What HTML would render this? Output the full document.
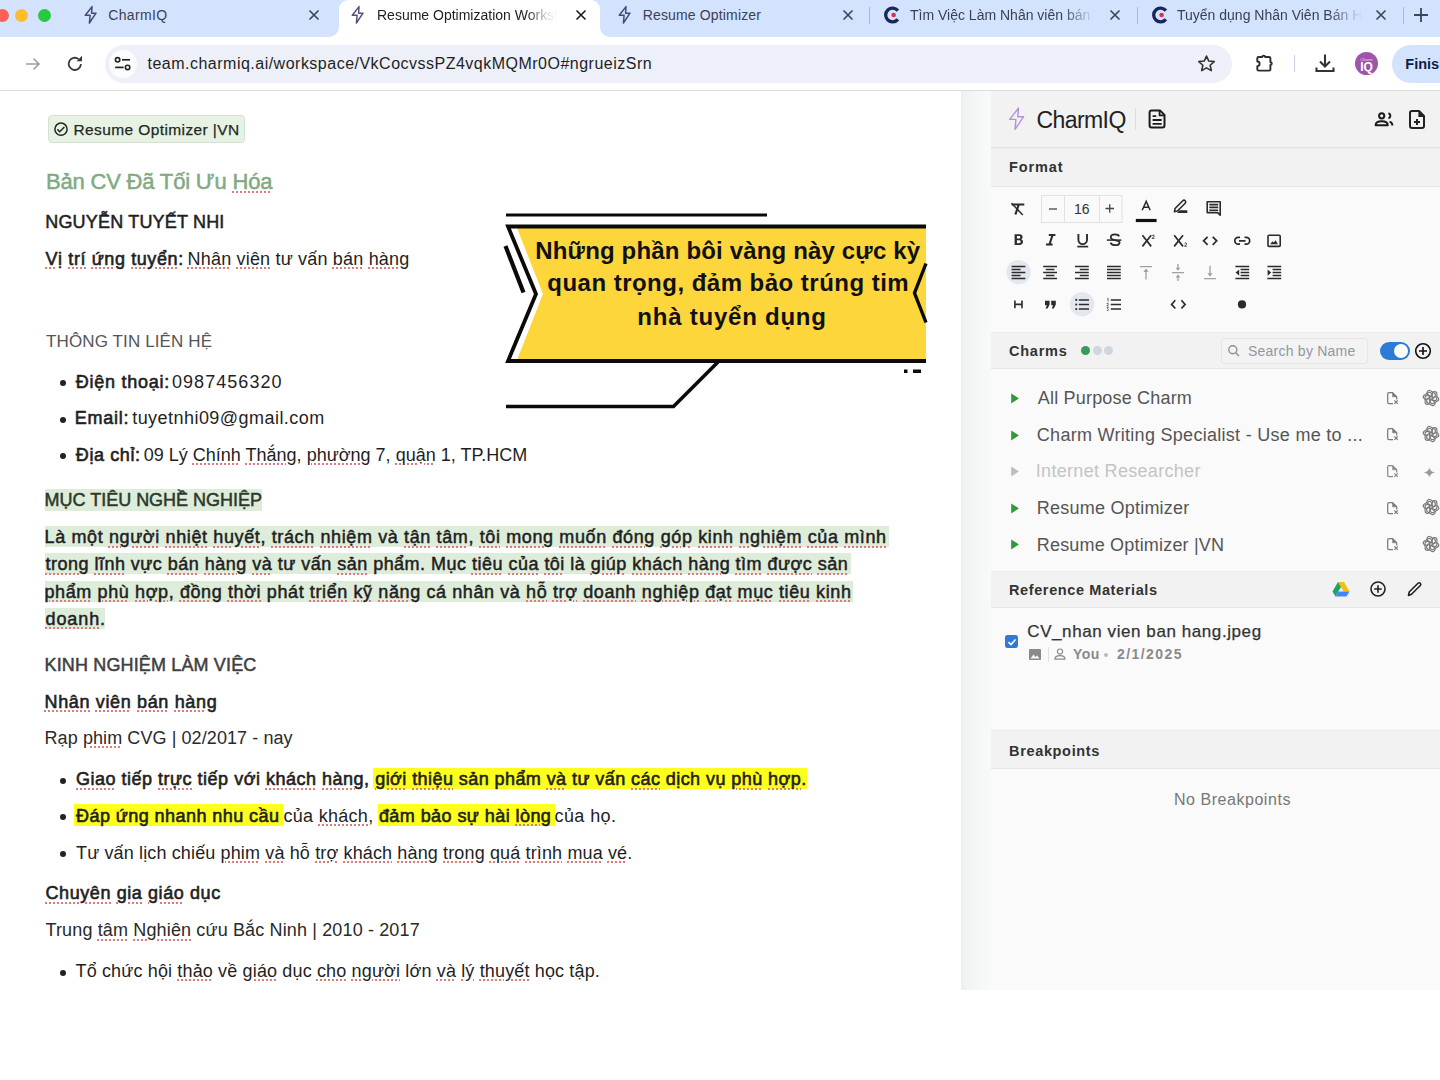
<!DOCTYPE html><html><head><meta charset="utf-8"><title>CharmIQ</title><style>
*{margin:0;padding:0;box-sizing:border-box}
html,body{width:1440px;height:1080px;overflow:hidden;background:#fff;font-family:"Liberation Sans",sans-serif}
.t{position:absolute;white-space:nowrap}
.a{position:absolute}
svg{position:absolute;overflow:visible}
.med{-webkit-text-stroke:0.25px currentColor}
.med2{-webkit-text-stroke:0.5px currentColor}
.semi{-webkit-text-stroke:0.6px currentColor}
.hlg{background:#dfeddb}
.hly{background:#ffff1a}
.sp{text-decoration:underline dotted #e07a7a;text-decoration-thickness:1.5px;text-underline-offset:3px}
</style></head><body>
<div class="a" style="left:0;top:0;width:1440px;height:37px;background:#d3e3fd"></div>
<div class="a" style="left:-4.5px;top:8.5px;width:13px;height:13px;border-radius:50%;background:#ff5f57"></div>
<div class="a" style="left:14.5px;top:8.5px;width:13px;height:13px;border-radius:50%;background:#febc2e"></div>
<div class="a" style="left:37.5px;top:8.5px;width:13px;height:13px;border-radius:50%;background:#28c840"></div>
<div class="a" style="left:338.5px;top:0;width:261.5px;height:38px;background:#fff;border-radius:9px 9px 0 0"></div>
<div class="a" style="left:328.5px;top:27px;width:10px;height:10px;background:#fff"></div><div class="a" style="left:328.5px;top:27px;width:10px;height:10px;background:#d3e3fd;border-bottom-right-radius:10px"></div>
<div class="a" style="left:600px;top:27px;width:10px;height:10px;background:#fff"></div><div class="a" style="left:600px;top:27px;width:10px;height:10px;background:#d3e3fd;border-bottom-left-radius:10px"></div>
<svg style="left:84px;top:5px" width="14.0" height="20.0" viewBox="0 0 14 20"><path d="M8 1.6 L1.3 10.3 H6.1 L5.4 18 L12 8.2 H7.6 Z" fill="none" stroke="#474a78" stroke-width="1.5" stroke-linejoin="round"/></svg>
<svg style="left:310.0px;top:11.0px" width="8" height="8" viewBox="0 0 8 8"><path d="M0 0L8 8M8 0L0 8" stroke="#3c4658" stroke-width="1.7" stroke-linecap="round"/></svg>
<svg style="left:350.7px;top:5px" width="14.0" height="20.0" viewBox="0 0 14 20"><path d="M8 1.6 L1.3 10.3 H6.1 L5.4 18 L12 8.2 H7.6 Z" fill="none" stroke="#5a4f7a" stroke-width="1.5" stroke-linejoin="round"/></svg>
<div class="t " style="left:377px;top:6.15px;font-size:14px;line-height:18px;font-weight:400;color:#1f1f1f;width:185px;overflow:hidden;-webkit-mask-image:linear-gradient(90deg,#000 84%,transparent 100%)"><span style="-webkit-mask-image:linear-gradient(90deg,#000 80%,transparent 100%)">Resume Optimization Worksh</span></div>
<svg style="left:577.0px;top:11.0px" width="8" height="8" viewBox="0 0 8 8"><path d="M0 0L8 8M8 0L0 8" stroke="#1f1f1f" stroke-width="1.7" stroke-linecap="round"/></svg>
<svg style="left:618px;top:5px" width="14.0" height="20.0" viewBox="0 0 14 20"><path d="M8 1.6 L1.3 10.3 H6.1 L5.4 18 L12 8.2 H7.6 Z" fill="none" stroke="#474a78" stroke-width="1.5" stroke-linejoin="round"/></svg>
<svg style="left:844.0px;top:11.0px" width="8" height="8" viewBox="0 0 8 8"><path d="M0 0L8 8M8 0L0 8" stroke="#3c4658" stroke-width="1.7" stroke-linecap="round"/></svg>
<div class="a" style="left:869px;top:7px;width:1px;height:17px;background:#a8bcd8"></div>
<svg style="left:883px;top:5.5px" width="18" height="18" viewBox="0 0 18 18"><path d="M14.9 4.6 A6.9 6.9 0 1 0 14.9 13.4" fill="none" stroke="#1b2559" stroke-width="3.3"/><circle cx="10.6" cy="9" r="2.3" fill="#e8294a"/></svg>
<div class="t " style="left:910px;top:6.15px;font-size:14px;line-height:18px;font-weight:400;color:#3b3f55;width:185px;overflow:hidden;-webkit-mask-image:linear-gradient(90deg,#000 82%,transparent 100%)">Tìm Việc Làm Nhân viên bán</div>
<svg style="left:1111.0px;top:11.0px" width="8" height="8" viewBox="0 0 8 8"><path d="M0 0L8 8M8 0L0 8" stroke="#3c4658" stroke-width="1.7" stroke-linecap="round"/></svg>
<div class="a" style="left:1137px;top:7px;width:1px;height:17px;background:#a8bcd8"></div>
<svg style="left:1150.5px;top:5.5px" width="18" height="18" viewBox="0 0 18 18"><path d="M14.9 4.6 A6.9 6.9 0 1 0 14.9 13.4" fill="none" stroke="#1b2559" stroke-width="3.3"/><circle cx="10.6" cy="9" r="2.3" fill="#e8294a"/></svg>
<div class="t " style="left:1177px;top:6.15px;font-size:14px;line-height:18px;font-weight:400;color:#3b3f55;width:185px;overflow:hidden;-webkit-mask-image:linear-gradient(90deg,#000 82%,transparent 100%)">Tuyển dụng Nhân Viên Bán H</div>
<svg style="left:1377.0px;top:11.0px" width="8" height="8" viewBox="0 0 8 8"><path d="M0 0L8 8M8 0L0 8" stroke="#3c4658" stroke-width="1.7" stroke-linecap="round"/></svg>
<div class="a" style="left:1403px;top:7px;width:1px;height:17px;background:#a8bcd8"></div>
<svg style="left:1414px;top:8px" width="14" height="14" viewBox="0 0 14 14"><path d="M7 0V14M0 7H14" stroke="#3c4658" stroke-width="1.8"/></svg>
<div class="a" style="left:0;top:90px;width:1440px;height:1px;background:#dadce0"></div>
<svg style="left:25px;top:56px" width="16" height="16" viewBox="0 0 16 16"><path d="M1 8H14M8.5 2.5L14 8L8.5 13.5" fill="none" stroke="#a0a0a0" stroke-width="1.6"/></svg>
<svg style="left:67px;top:55px" width="17" height="17" viewBox="0 0 17 17"><path d="M13.9 9.0 A6.1 6.1 0 1 1 11.6 4.1" fill="none" stroke="#3a3a3a" stroke-width="1.8"/><path d="M9.6 6.2 H15 V0.8 Z" fill="#3a3a3a"/></svg>
<div class="a" style="left:105px;top:45px;width:1127px;height:38px;border-radius:19px;background:#edf0f8"></div>
<div class="a" style="left:109px;top:49.5px;width:28px;height:28px;border-radius:50%;background:#fbfcfe"></div>
<svg style="left:114px;top:55px" width="18" height="18" viewBox="0 0 18 18"><circle cx="3.6" cy="4.8" r="2.2" fill="none" stroke="#222" stroke-width="1.6"/><path d="M8 4.8H16" stroke="#222" stroke-width="1.7"/><circle cx="13.6" cy="12.4" r="2.2" fill="none" stroke="#222" stroke-width="1.6"/><path d="M1.2 12.4H9.6" stroke="#222" stroke-width="1.7"/></svg>
<svg style="left:1197px;top:54px" width="19" height="19" viewBox="0 0 24 24"><path d="M12 2.6l2.9 6.3 6.9.7-5.2 4.6 1.5 6.8L12 17.5l-6.1 3.5 1.5-6.8-5.2-4.6 6.9-.7z" fill="none" stroke="#333" stroke-width="2" stroke-linejoin="round"/></svg>
<svg style="left:0;top:0" width="1440" height="1080"><path d="M1258.6 57H1262.3A1.4 1.4 0 0 1 1265.1 57H1269.1Q1270.4 57 1270.4 58.3V62.2A1.4 1.4 0 0 1 1270.4 65V69.3Q1270.4 70.6 1269.1 70.6H1258.6Q1257.3 70.6 1257.3 69.3V66.1A2.3 2.3 0 0 0 1257.3 61.5V58.3Q1257.3 57 1258.6 57Z" fill="none" stroke="#2d2d2d" stroke-width="1.9" stroke-linejoin="round"/></svg>
<div class="a" style="left:1293.5px;top:55px;width:1.5px;height:17px;background:#c5d3e8"></div>
<svg style="left:1314px;top:52px" width="22" height="22" viewBox="0 0 22 22"><path d="M11 2.5V14.5M6 9.5L11 14.5L16 9.5" fill="none" stroke="#333" stroke-width="2.1"/><path d="M2.5 15.5V19H19.5V15.5" fill="none" stroke="#333" stroke-width="2.1"/></svg>
<div class="a" style="left:1355px;top:52px;width:23px;height:23px;border-radius:50%;background:#9d55a9"></div>
<div class="t" style="left:1355px;top:57px;width:23px;text-align:center;font-size:4px;line-height:5px;color:#f3def6">Charm</div>
<div class="t" style="left:1355px;top:60px;width:23px;text-align:center;font-size:12px;line-height:14px;font-weight:700;color:#fff">IQ</div>
<div class="a" style="left:1392px;top:45px;width:90px;height:38px;border-radius:19px;background:#d3e3fd"></div>
<div class="a" style="left:961px;top:91px;width:30px;height:899px;background:linear-gradient(90deg,#eceeee 0,#f1f2f2 4px,#f6f7f7 20px,#f8f9f9 100%)"></div>
<div class="a" style="left:991px;top:91px;width:449px;height:899px;background:#fafafa"></div>
<div class="a" style="left:48px;top:115px;width:197px;height:28px;border-radius:4px;background:#e7f2e5;border:1px solid #d3e3d0"></div>
<svg style="left:54px;top:122px" width="14" height="14" viewBox="0 0 14 14"><circle cx="7" cy="7.2" r="6.1" fill="none" stroke="#1f2a1f" stroke-width="1.5"/><path d="M3.4 7.4L5.7 9.7L10.4 4.9" fill="none" stroke="#1f2a1f" stroke-width="1.5"/></svg>
<div class="a" style="left:45px;top:489.4px;width:217px;height:21.200000000000045px;background:#deecda"></div>
<div class="a" style="left:45px;top:526.0px;width:844.3px;height:21.199999999999932px;background:#deecda"></div>
<div class="a" style="left:45px;top:553.3px;width:805.8px;height:21.199999999999932px;background:#deecda"></div>
<div class="a" style="left:45px;top:580.6px;width:808.3px;height:21.199999999999932px;background:#deecda"></div>
<div class="a" style="left:45px;top:607.9px;width:60px;height:21.199999999999932px;background:#deecda"></div>
<div class="a" style="left:372.9px;top:767.9px;width:433.80000000000007px;height:21.300000000000068px;background:#ffff1e"></div>
<div class="a" style="left:74.4px;top:804.4px;width:208.9px;height:21.300000000000068px;background:#ffff1e"></div>
<div class="a" style="left:377.9px;top:804.4px;width:176.70000000000005px;height:21.300000000000068px;background:#ffff1e"></div>
<div class="a" style="left:59.5px;top:380.4px;width:6px;height:6px;border-radius:50%;background:#222"></div>
<div class="a" style="left:59.5px;top:416.9px;width:6px;height:6px;border-radius:50%;background:#222"></div>
<div class="a" style="left:59.5px;top:453.4px;width:6px;height:6px;border-radius:50%;background:#222"></div>
<div class="a" style="left:59.5px;top:777.9px;width:6px;height:6px;border-radius:50%;background:#222"></div>
<div class="a" style="left:59.5px;top:814.4px;width:6px;height:6px;border-radius:50%;background:#222"></div>
<div class="a" style="left:59.5px;top:851.4px;width:6px;height:6px;border-radius:50%;background:#222"></div>
<div class="a" style="left:59.5px;top:969.6px;width:6px;height:6px;border-radius:50%;background:#222"></div>
<svg style="left:0;top:0" width="1440" height="1080" viewBox="0 0 1440 1080">
<path d="M517 228 L926 228 L926 360 L517 360 L543 294 Z" fill="#fdd63b"/>
<path d="M926 226.5 L508 226.5 L536 294 L508 361 L926 361" fill="none" stroke="#0a0a0a" stroke-width="3.8" stroke-linejoin="miter"/>
<path d="M926 263.5 L914.5 293 L926 322.5" fill="none" stroke="#0a0a0a" stroke-width="3.4"/>
<path d="M506 215 L767 215" stroke="#0a0a0a" stroke-width="3.2"/>
<path d="M505.5 246 L523.5 292.5" stroke="#0a0a0a" stroke-width="4.2"/>
<path d="M506 406.5 L673.5 406.5 L718 362" fill="none" stroke="#0a0a0a" stroke-width="3.6"/>
<rect x="904" y="369.5" width="3.5" height="3.5" fill="#0a0a0a"/>
<rect x="913" y="369.5" width="8" height="3.5" fill="#0a0a0a"/>
</svg>
<div class="a" style="left:991px;top:91px;width:449px;height:57px;background:#f2f2f2;border-bottom:1px solid #e3e3e3"></div>
<svg style="left:1008px;top:106px" width="18.2" height="26" viewBox="0 0 14 20"><path d="M8 1.6 L1.3 10.3 H6.1 L5.4 18 L12 8.2 H7.6 Z" fill="none" stroke="#b98fdc" stroke-width="1.1" stroke-linejoin="round"/></svg>
<div class="a" style="left:1135px;top:108px;width:1px;height:22px;background:#dcdcdc"></div>
<svg style="left:0;top:0" width="1440" height="1080"><path d="M1151.6 110.6H1160.2L1164.5 114.9V125.6Q1164.5 127.6 1162.5 127.6H1151.6Q1149.6 127.6 1149.6 125.6V112.6Q1149.6 110.6 1151.6 110.6Z" fill="none" stroke="#1a1a1a" stroke-width="2" stroke-linejoin="round"/><path d="M1159.6 110.8V115.3H1164.3" fill="none" stroke="#1a1a1a" stroke-width="1.8"/><path d="M1153.3 116.1H1155.6M1153.3 120H1161M1153.3 123.9H1161" stroke="#1a1a1a" stroke-width="1.8" stroke-linecap="round"/></svg>
<svg style="left:0;top:0" width="1440" height="1080"><circle cx="1381.7" cy="115.8" r="2.6" fill="none" stroke="#1a1a1a" stroke-width="2"/><path d="M1388.4 113.2A2.7 2.7 0 0 1 1388.4 118.4" fill="none" stroke="#1a1a1a" stroke-width="2"/><path d="M1375.6 125.2C1375.6 122.4 1378.4 121.2 1381.7 121.2S1387.8 122.4 1387.8 125.2Z" fill="none" stroke="#1a1a1a" stroke-width="1.9" stroke-linejoin="round"/><path d="M1389.6 121.6C1391.2 122.2 1392.4 123.2 1392.4 125.4" fill="none" stroke="#1a1a1a" stroke-width="2"/></svg>
<svg style="left:1407px;top:109px" width="20" height="21" viewBox="0 0 20 21"><path d="M3 4Q3 2 5 2H12L17 7V17Q17 19 15 19H5Q3 19 3 17Z" fill="none" stroke="#222" stroke-width="2" stroke-linejoin="round"/><path d="M12 2.5V7.5H17" fill="#222" stroke="#222" stroke-width="1.2"/><path d="M10 10V16M7 13H13" stroke="#222" stroke-width="2"/></svg>
<div class="a" style="left:991px;top:148px;width:449px;height:39px;background:#f2f2f2;border-top:1px solid #ececec;border-bottom:1px solid #e6e6e6"></div>
<svg style="left:0;top:0" width="1440" height="1080" viewBox="0 0 1440 1080"><path d="M1011.7 204.5H1024.3" fill="none" stroke="#2b2b2b" stroke-width="2.0" /><path d="M1018.6 205L1015.4 214.5" fill="none" stroke="#2b2b2b" stroke-width="2.2" /><path d="M1011.5 203.2L1022.8 215" fill="none" stroke="#2b2b2b" stroke-width="1.5" /><rect x="1041.5" y="195.5" width="80.5" height="27" fill="none" stroke="#e2e2e2"/><path d="M1064.5 196V222M1099.5 196V222" stroke="#e2e2e2"/><path d="M1049 209H1057" fill="none" stroke="#444" stroke-width="1.3" /><path d="M1105.5 208.5H1114M1109.75 204.2V212.8" fill="none" stroke="#444" stroke-width="1.3" /><path d="M1142.2 210.2L1146.2 201.4L1150.2 210.2M1143.6 207.2H1148.8" fill="none" stroke="#2b2b2b" stroke-width="1.5" /><path d="M1135.8 220.5H1156.6" fill="none" stroke="#111" stroke-width="3.2" /><path d="M1174.5 211.8L1175 208.5L1182.8 200.8A1.6 1.6 0 0 1 1185.2 203.2L1177.4 211Z" fill="none" stroke="#2b2b2b" stroke-width="1.6" stroke-linejoin="round"/><path d="M1179.5 210.2H1187.3V212.9H1177Z" fill="#2b2b2b"/><path d="M1207.2 201.8H1220.2V215.2L1217.6 212.6H1207.2Z" fill="none" stroke="#2b2b2b" stroke-width="1.6" stroke-linejoin="round"/><path d="M1209.3 203.8H1218.2V205.4H1209.3ZM1209.3 206.6H1218.2V208.2H1209.3ZM1209.3 209.4H1218.2V211H1209.3Z" fill="#2b2b2b"/><path d="M1014.6 234.3H1019.3C1021.6 234.3 1022.6 235.5 1022.6 237C1022.6 238.2 1021.9 239 1021 239.3C1022.2 239.6 1023 240.5 1023 241.8C1023 243.7 1021.7 245 1019.4 245H1014.6ZM1016.9 236.1V238.6H1018.9C1019.8 238.6 1020.3 238.1 1020.3 237.35C1020.3 236.6 1019.8 236.1 1018.9 236.1ZM1016.9 240.3V243.2H1019.1C1020.1 243.2 1020.7 242.6 1020.7 241.75C1020.7 240.9 1020.1 240.3 1019.1 240.3Z" fill="#2b2b2b"/><path d="M1048.8 234.9H1055.4M1046 244.6H1052.6M1052.6 234.9L1049.4 244.6" fill="none" stroke="#2b2b2b" stroke-width="2.0" /><path d="M1078.4 234V239.8A4.3 4.3 0 0 0 1087 239.8V234" fill="none" stroke="#2b2b2b" stroke-width="1.9" /><path d="M1077.3 246.6H1088.2" fill="none" stroke="#2b2b2b" stroke-width="1.7" /><path d="M1119.3 236.3C1118.6 235 1117.2 234.3 1114.9 234.3C1112.4 234.3 1110.8 235.6 1110.8 237.3C1110.8 241.6 1119.6 239.2 1119.6 242.4C1119.6 244.1 1117.8 245.1 1115.2 245.1C1112.8 245.1 1111.3 244.2 1110.4 242.7" fill="none" stroke="#2b2b2b" stroke-width="1.8" /><path d="M1106.9 240.1H1121.4" fill="none" stroke="#2b2b2b" stroke-width="1.5" /><path d="M1142.4 235.2L1151.2 246.4M1151.2 235.2L1142.4 246.4" fill="none" stroke="#2b2b2b" stroke-width="1.7" /><path d="M1152.2 235.6Q1153.2 234.6 1154.1 235.5Q1154.6 236.3 1152.2 238.4H1154.4" fill="none" stroke="#2b2b2b" stroke-width="0.9" /><path d="M1174.2 235.2L1183 246.4M1183 235.2L1174.2 246.4" fill="none" stroke="#2b2b2b" stroke-width="1.7" /><path d="M1184.6 243.4Q1185.6 242.4 1186.5 243.3Q1187 244.1 1184.6 246.2H1186.8" fill="none" stroke="#2b2b2b" stroke-width="0.9" /><path d="M1207.6 236.8L1203.6 240.8L1207.6 244.8M1212.7 236.8L1216.7 240.8L1212.7 244.8" fill="none" stroke="#2b2b2b" stroke-width="1.7" /><path d="M1240 237.4H1238.2A3.4 3.4 0 0 0 1238.2 244.2H1240M1244.5 237.4H1246.3A3.4 3.4 0 0 1 1246.3 244.2H1244.5M1239 240.8H1245.5" fill="none" stroke="#2b2b2b" stroke-width="1.7" /><rect x="1268" y="235.2" width="12.2" height="11.2" rx="1" fill="none" stroke="#2b2b2b" stroke-width="1.6"/><path d="M1270.2 244.2L1272.4 241.2L1273.8 242.6L1275.6 240.2L1278 244.2Z" fill="#2b2b2b"/><circle cx="1018.5" cy="272.1" r="12.2" fill="#e3e8ef"/><path d="M1011.6 266.6H1025.4M1011.6 269.6H1020.6M1011.6 272.6H1025.4M1011.6 275.6H1020.6M1011.6 278.6H1025.4" fill="none" stroke="#2b2b2b" stroke-width="1.5" /><path d="M1043.2 266.6H1057M1045.8 269.6H1054.4M1043.2 272.6H1057M1045.8 275.6H1054.4M1043.2 278.6H1057" fill="none" stroke="#2b2b2b" stroke-width="1.5" /><path d="M1075 266.6H1088.8M1079.8 269.6H1088.8M1075 272.6H1088.8M1079.8 275.6H1088.8M1075 278.6H1088.8" fill="none" stroke="#2b2b2b" stroke-width="1.5" /><path d="M1107 266.6H1120.8M1107 269.6H1120.8M1107 272.6H1120.8M1107 275.6H1120.8M1107 278.6H1120.8" fill="none" stroke="#2b2b2b" stroke-width="1.5" /><path d="M1140 266.6H1152M1146 269.5V279.5" fill="none" stroke="#a0a0a0" stroke-width="1.3" /><path d="M1143.4 272L1146 268.6L1148.6 272Z" fill="#a0a0a0"/><path d="M1172 272.6H1184M1178 264V269.5M1178 275.5V281" fill="none" stroke="#a0a0a0" stroke-width="1.3" /><path d="M1175.6 267.8L1178 270.8L1180.4 267.8ZM1175.6 277.4L1178 274.4L1180.4 277.4Z" fill="#a0a0a0"/><path d="M1204 278.6H1216M1210 265.8V275.8" fill="none" stroke="#a0a0a0" stroke-width="1.3" /><path d="M1207.4 273.2L1210 276.6L1212.6 273.2Z" fill="#a0a0a0"/><path d="M1235.4 266.6H1249.2M1240.6 269.6H1249.2M1240.6 272.6H1249.2M1240.6 275.6H1249.2M1235.4 278.6H1249.2" fill="none" stroke="#2b2b2b" stroke-width="1.5" /><path d="M1239.2 269.4V275.8L1235.6 272.6Z" fill="#2b2b2b"/><path d="M1267.4 266.6H1281.2M1272.6 269.6H1281.2M1272.6 272.6H1281.2M1272.6 275.6H1281.2M1267.4 278.6H1281.2" fill="none" stroke="#2b2b2b" stroke-width="1.5" /><path d="M1267.6 269.4V275.8L1271.2 272.6Z" fill="#2b2b2b"/><path d="M1014.9 300.6V308.3M1022 300.6V308.3M1014.9 304.4H1022" fill="none" stroke="#2b2b2b" stroke-width="1.6" /><path d="M1045 300.8H1049.6V304.6L1047.6 308.5H1045.6L1046.9 305.2H1045Z" fill="#2b2b2b"/><path d="M1051.2 300.8H1055.8V304.6L1053.8 308.5H1051.8L1053.1 305.2H1051.2Z" fill="#2b2b2b"/><circle cx="1082.1" cy="304.2" r="12.2" fill="#e3e8ef"/><path d="M1078.8 299.9H1089M1078.8 304.5H1089M1078.8 309.1H1089" fill="none" stroke="#2b2b2b" stroke-width="1.5" /><circle cx="1076.2" cy="299.9" r="1.05" fill="#2b2b2b"/><circle cx="1076.2" cy="304.5" r="1.05" fill="#2b2b2b"/><circle cx="1076.2" cy="309.1" r="1.05" fill="#2b2b2b"/><path d="M1110.8 299.9H1121M1110.8 304.5H1121M1110.8 309.1H1121" fill="none" stroke="#2b2b2b" stroke-width="1.5" /><path d="M1107.2 298.4H1108.1V301.6M1106.7 303.4Q1108.6 302.6 1108.3 304.3L1106.8 305.9H1108.6M1106.8 307.4H1108.4L1107.6 308.6Q1108.8 309 1108.1 310.4H1106.8" fill="none" stroke="#2b2b2b" stroke-width="0.7" /><path d="M1175.3 300.3L1171.6 304.4L1175.3 308.5M1181.4 300.3L1185.1 304.4L1181.4 308.5" fill="none" stroke="#2b2b2b" stroke-width="1.7" /><circle cx="1242" cy="304.4" r="4.1" fill="#2b2b2b"/></svg>
<div class="t " style="left:1082px;top:199.95px;font-size:14px;line-height:18px;font-weight:400;color:#333;"><span style="display:inline-block;width:0;text-align:center"><span style="position:relative;left:-8px">16</span></span></div>
<div class="a" style="left:991px;top:332px;width:449px;height:37px;background:#f2f2f2;border-top:1px solid #ececec;border-bottom:1px solid #e6e6e6"></div>
<div class="a" style="left:1080.5px;top:346px;width:9px;height:9px;border-radius:50%;background:#3a9a5b"></div>
<div class="a" style="left:1092.5px;top:346px;width:9px;height:9px;border-radius:50%;background:#cfd6e0"></div>
<div class="a" style="left:1103.5px;top:346px;width:9px;height:9px;border-radius:50%;background:#cfd6e0"></div>
<div class="a" style="left:1221px;top:338px;width:147px;height:25.5px;border:1px solid #e6e6e6;border-radius:3px;background:#f3f3f3"></div>
<svg style="left:1227px;top:344px" width="14" height="14" viewBox="0 0 14 14"><circle cx="5.8" cy="5.8" r="4" fill="none" stroke="#8a8f98" stroke-width="1.4"/><path d="M8.8 8.8L12 12" stroke="#8a8f98" stroke-width="1.5"/></svg>
<div class="a" style="left:1380px;top:342px;width:30px;height:17.5px;border-radius:9px;background:#2c7bd6"></div>
<div class="a" style="left:1393.5px;top:343.7px;width:14px;height:14px;border-radius:50%;background:#fff"></div>
<svg style="left:1414px;top:342px" width="18" height="18" viewBox="0 0 18 18"><circle cx="9" cy="9" r="7.3" fill="none" stroke="#111" stroke-width="1.6"/><path d="M9 5V13M5 9H13" stroke="#111" stroke-width="1.6"/></svg>
<svg style="left:1011px;top:393.0px" width="9" height="11" viewBox="0 0 9 11"><path d="M0.2 0.4L7.9 5.4L0.2 10.4Z" fill="#2e9a3a"/></svg>
<svg style="left:1386.8px;top:391.79999999999995px" width="12" height="13" viewBox="0 0 12 13"><path d="M9.7 7.4V4.8L5.6 0.7H2Q0.7 0.7 0.7 2V10.2Q0.7 11.5 2 11.5H6" fill="none" stroke="#7a7a7a" stroke-width="1.25" stroke-linejoin="round"/><path d="M5.6 0.7V4.8H9.7Z" fill="#7a7a7a" stroke="#7a7a7a" stroke-width="0.6" stroke-linejoin="round"/><path d="M7.4 8.4L10.8 11.8M10.8 8.4L7.4 11.8" stroke="#7a7a7a" stroke-width="1.2"/></svg>
<svg style="left:1423.2px;top:389.5px" width="16" height="16" viewBox="-8 -8 16 16"><rect x="1.3" y="-6.4" width="4.6" height="9" rx="2.3" transform="rotate(0)" fill="none" stroke="#7a7a7a" stroke-width="1.15"/><rect x="1.3" y="-6.4" width="4.6" height="9" rx="2.3" transform="rotate(60)" fill="none" stroke="#7a7a7a" stroke-width="1.15"/><rect x="1.3" y="-6.4" width="4.6" height="9" rx="2.3" transform="rotate(120)" fill="none" stroke="#7a7a7a" stroke-width="1.15"/><rect x="1.3" y="-6.4" width="4.6" height="9" rx="2.3" transform="rotate(180)" fill="none" stroke="#7a7a7a" stroke-width="1.15"/><rect x="1.3" y="-6.4" width="4.6" height="9" rx="2.3" transform="rotate(240)" fill="none" stroke="#7a7a7a" stroke-width="1.15"/><rect x="1.3" y="-6.4" width="4.6" height="9" rx="2.3" transform="rotate(300)" fill="none" stroke="#7a7a7a" stroke-width="1.15"/></svg>
<svg style="left:1011px;top:429.6px" width="9" height="11" viewBox="0 0 9 11"><path d="M0.2 0.4L7.9 5.4L0.2 10.4Z" fill="#2e9a3a"/></svg>
<svg style="left:1386.8px;top:428.4px" width="12" height="13" viewBox="0 0 12 13"><path d="M9.7 7.4V4.8L5.6 0.7H2Q0.7 0.7 0.7 2V10.2Q0.7 11.5 2 11.5H6" fill="none" stroke="#7a7a7a" stroke-width="1.25" stroke-linejoin="round"/><path d="M5.6 0.7V4.8H9.7Z" fill="#7a7a7a" stroke="#7a7a7a" stroke-width="0.6" stroke-linejoin="round"/><path d="M7.4 8.4L10.8 11.8M10.8 8.4L7.4 11.8" stroke="#7a7a7a" stroke-width="1.2"/></svg>
<svg style="left:1423.2px;top:426.1px" width="16" height="16" viewBox="-8 -8 16 16"><rect x="1.3" y="-6.4" width="4.6" height="9" rx="2.3" transform="rotate(0)" fill="none" stroke="#7a7a7a" stroke-width="1.15"/><rect x="1.3" y="-6.4" width="4.6" height="9" rx="2.3" transform="rotate(60)" fill="none" stroke="#7a7a7a" stroke-width="1.15"/><rect x="1.3" y="-6.4" width="4.6" height="9" rx="2.3" transform="rotate(120)" fill="none" stroke="#7a7a7a" stroke-width="1.15"/><rect x="1.3" y="-6.4" width="4.6" height="9" rx="2.3" transform="rotate(180)" fill="none" stroke="#7a7a7a" stroke-width="1.15"/><rect x="1.3" y="-6.4" width="4.6" height="9" rx="2.3" transform="rotate(240)" fill="none" stroke="#7a7a7a" stroke-width="1.15"/><rect x="1.3" y="-6.4" width="4.6" height="9" rx="2.3" transform="rotate(300)" fill="none" stroke="#7a7a7a" stroke-width="1.15"/></svg>
<svg style="left:1011px;top:466.2px" width="9" height="11" viewBox="0 0 9 11"><path d="M0.2 0.4L7.9 5.4L0.2 10.4Z" fill="#bdbdbd"/></svg>
<svg style="left:1386.8px;top:464.99999999999994px" width="12" height="13" viewBox="0 0 12 13"><path d="M9.7 7.4V4.8L5.6 0.7H2Q0.7 0.7 0.7 2V10.2Q0.7 11.5 2 11.5H6" fill="none" stroke="#8a8a8a" stroke-width="1.25" stroke-linejoin="round"/><path d="M5.6 0.7V4.8H9.7Z" fill="#8a8a8a" stroke="#8a8a8a" stroke-width="0.6" stroke-linejoin="round"/><path d="M7.4 8.4L10.8 11.8M10.8 8.4L7.4 11.8" stroke="#8a8a8a" stroke-width="1.2"/></svg>
<div class="t " style="left:1423px;top:462.90px;font-size:15px;line-height:19px;font-weight:400;color:#999;">✦</div>
<svg style="left:1011px;top:502.8px" width="9" height="11" viewBox="0 0 9 11"><path d="M0.2 0.4L7.9 5.4L0.2 10.4Z" fill="#2e9a3a"/></svg>
<svg style="left:1386.8px;top:501.6px" width="12" height="13" viewBox="0 0 12 13"><path d="M9.7 7.4V4.8L5.6 0.7H2Q0.7 0.7 0.7 2V10.2Q0.7 11.5 2 11.5H6" fill="none" stroke="#7a7a7a" stroke-width="1.25" stroke-linejoin="round"/><path d="M5.6 0.7V4.8H9.7Z" fill="#7a7a7a" stroke="#7a7a7a" stroke-width="0.6" stroke-linejoin="round"/><path d="M7.4 8.4L10.8 11.8M10.8 8.4L7.4 11.8" stroke="#7a7a7a" stroke-width="1.2"/></svg>
<svg style="left:1423.2px;top:499.30000000000007px" width="16" height="16" viewBox="-8 -8 16 16"><rect x="1.3" y="-6.4" width="4.6" height="9" rx="2.3" transform="rotate(0)" fill="none" stroke="#7a7a7a" stroke-width="1.15"/><rect x="1.3" y="-6.4" width="4.6" height="9" rx="2.3" transform="rotate(60)" fill="none" stroke="#7a7a7a" stroke-width="1.15"/><rect x="1.3" y="-6.4" width="4.6" height="9" rx="2.3" transform="rotate(120)" fill="none" stroke="#7a7a7a" stroke-width="1.15"/><rect x="1.3" y="-6.4" width="4.6" height="9" rx="2.3" transform="rotate(180)" fill="none" stroke="#7a7a7a" stroke-width="1.15"/><rect x="1.3" y="-6.4" width="4.6" height="9" rx="2.3" transform="rotate(240)" fill="none" stroke="#7a7a7a" stroke-width="1.15"/><rect x="1.3" y="-6.4" width="4.6" height="9" rx="2.3" transform="rotate(300)" fill="none" stroke="#7a7a7a" stroke-width="1.15"/></svg>
<svg style="left:1011px;top:539.4px" width="9" height="11" viewBox="0 0 9 11"><path d="M0.2 0.4L7.9 5.4L0.2 10.4Z" fill="#2e9a3a"/></svg>
<svg style="left:1386.8px;top:538.1999999999999px" width="12" height="13" viewBox="0 0 12 13"><path d="M9.7 7.4V4.8L5.6 0.7H2Q0.7 0.7 0.7 2V10.2Q0.7 11.5 2 11.5H6" fill="none" stroke="#7a7a7a" stroke-width="1.25" stroke-linejoin="round"/><path d="M5.6 0.7V4.8H9.7Z" fill="#7a7a7a" stroke="#7a7a7a" stroke-width="0.6" stroke-linejoin="round"/><path d="M7.4 8.4L10.8 11.8M10.8 8.4L7.4 11.8" stroke="#7a7a7a" stroke-width="1.2"/></svg>
<svg style="left:1423.2px;top:535.9px" width="16" height="16" viewBox="-8 -8 16 16"><rect x="1.3" y="-6.4" width="4.6" height="9" rx="2.3" transform="rotate(0)" fill="none" stroke="#7a7a7a" stroke-width="1.15"/><rect x="1.3" y="-6.4" width="4.6" height="9" rx="2.3" transform="rotate(60)" fill="none" stroke="#7a7a7a" stroke-width="1.15"/><rect x="1.3" y="-6.4" width="4.6" height="9" rx="2.3" transform="rotate(120)" fill="none" stroke="#7a7a7a" stroke-width="1.15"/><rect x="1.3" y="-6.4" width="4.6" height="9" rx="2.3" transform="rotate(180)" fill="none" stroke="#7a7a7a" stroke-width="1.15"/><rect x="1.3" y="-6.4" width="4.6" height="9" rx="2.3" transform="rotate(240)" fill="none" stroke="#7a7a7a" stroke-width="1.15"/><rect x="1.3" y="-6.4" width="4.6" height="9" rx="2.3" transform="rotate(300)" fill="none" stroke="#7a7a7a" stroke-width="1.15"/></svg>
<div class="a" style="left:991px;top:571px;width:449px;height:37px;background:#f2f2f2;border-top:1px solid #ececec;border-bottom:1px solid #e6e6e6"></div>
<svg style="left:1332px;top:581px" width="18" height="16" viewBox="0 0 18 16"><path d="M6 1H12L17.5 10.5H11.5Z" fill="#f9bc15"/><path d="M6 1L0.5 10.5L3.5 15.5L9 6Z" fill="#1ea362"/><path d="M3.5 15.5H14.5L17.5 10.5H6.5Z" fill="#4285f4"/></svg>
<svg style="left:1369px;top:581px" width="18" height="18" viewBox="0 0 18 18"><circle cx="9" cy="8" r="7" fill="none" stroke="#222" stroke-width="1.6"/><path d="M9 4.2V11.8M5.2 8H12.8" stroke="#222" stroke-width="1.6"/></svg>
<svg style="left:1405px;top:580px" width="18" height="18" viewBox="0 0 18 18"><path d="M3.5 15.5L4.2 12L13 3.2A1.5 1.5 0 0 1 15.3 5.5L6.5 14.3Z" fill="none" stroke="#222" stroke-width="1.6" stroke-linejoin="round"/></svg>
<div class="a" style="left:1004.5px;top:634.5px;width:13.5px;height:13.5px;border-radius:2.5px;background:#2f7bd4"></div>
<svg style="left:1004.5px;top:634.5px" width="14" height="14" viewBox="0 0 14 14"><path d="M3.5 7.2L6 9.6L10.5 4.5" fill="none" stroke="#fff" stroke-width="1.6"/></svg>
<svg style="left:1028px;top:648px" width="14" height="13" viewBox="0 0 14 13"><rect x="1" y="1" width="12" height="11" rx="1" fill="#8a8a8a"/><path d="M2.5 10.5L5.5 6.5L7.5 9L9 7.5L11.5 10.5Z" fill="#fafafa"/></svg>
<div class="a" style="left:1047.5px;top:647px;width:1px;height:15px;background:#e2e2e2"></div>
<svg style="left:1053px;top:647px" width="14" height="14" viewBox="0 0 14 14"><circle cx="7" cy="4.6" r="2.6" fill="none" stroke="#8a8a8a" stroke-width="1.2"/><path d="M2 12.2C2 9.6 4.2 8.6 7 8.6S12 9.6 12 12.2Z" fill="none" stroke="#8a8a8a" stroke-width="1.2"/></svg>
<div class="a" style="left:1103.5px;top:652.5px;width:4px;height:4px;border-radius:50%;background:#bbb"></div>
<div class="a" style="left:991px;top:730px;width:449px;height:39px;background:#f2f2f2;border-top:1px solid #ececec;border-bottom:1px solid #e6e6e6"></div>
<div class="t " style="left:108.3px;top:5.55px;font-size:14px;line-height:18px;font-weight:400;color:#3b3f55;letter-spacing:0.333px;">CharmIQ</div>
<div class="t " style="left:642.75px;top:5.55px;font-size:14px;line-height:18px;font-weight:400;color:#3b3f55;letter-spacing:0.15px;">Resume Optimizer</div>
<div class="t " style="left:147.5px;top:53.66px;font-size:16px;line-height:20px;font-weight:400;color:#1f1f1f;letter-spacing:0.491px;">team.charmiq.ai/workspace/VkCocvssPZ4vqkMQMr0O#ngrueizSrn</div>
<div class="t " style="left:1405.3px;top:54.98px;font-size:14.5px;line-height:18px;font-weight:700;color:#0b1d49;letter-spacing:0px;">Finish</div>
<div class="t med" style="left:73.5px;top:120.13px;font-size:15.5px;line-height:19px;font-weight:400;color:#1e2a1e;letter-spacing:0.395px;">Resume Optimizer |VN</div>
<div class="t med2" style="left:45.9px;top:167.58px;font-size:22px;line-height:28px;font-weight:400;color:#82aa82;letter-spacing:-0.179px;">Bản CV Đã Tối Ưu <span class="sp">Hóa</span></div>
<div class="t med2" style="left:45.25px;top:211.26px;font-size:18px;line-height:22px;font-weight:400;color:#1f1f1f;letter-spacing:0.183px;">NGUYỄN TUYẾT NHI</div>
<div class="t semi" style="left:45.5px;top:247.76px;font-size:18px;line-height:22px;font-weight:400;color:#1f1f1f;letter-spacing:0.594px;"><span class="sp">Vị</span> <span class="sp">trí</span> <span class="sp">ứng</span> <span class="sp">tuyển</span>:</div>
<div class="t " style="left:187.6px;top:247.76px;font-size:18px;line-height:22px;font-weight:400;color:#1f1f1f;letter-spacing:0.183px;"><span class="sp">Nhân</span> <span class="sp">viên</span> tư vấn <span class="sp">bán</span> <span class="sp">hàng</span></div>
<div class="t " style="left:46px;top:330.61px;font-size:17px;line-height:21px;font-weight:400;color:#555;letter-spacing:0.125px;">THÔNG TIN LIÊN HỆ</div>
<div class="t semi" style="left:75.8px;top:370.76px;font-size:18px;line-height:22px;font-weight:400;color:#1f1f1f;letter-spacing:0.74px;">Điện thoại:</div>
<div class="t " style="left:172px;top:370.76px;font-size:18px;line-height:22px;font-weight:400;color:#1f1f1f;letter-spacing:1.044px;">0987456320</div>
<div class="t semi" style="left:74.8px;top:407.26px;font-size:18px;line-height:22px;font-weight:400;color:#1f1f1f;letter-spacing:0.72px;">Email:</div>
<div class="t " style="left:132.2px;top:407.26px;font-size:18px;line-height:22px;font-weight:400;color:#1f1f1f;letter-spacing:0.458px;">tuyetnhi09@gmail.com</div>
<div class="t semi" style="left:75.8px;top:443.76px;font-size:18px;line-height:22px;font-weight:400;color:#1f1f1f;letter-spacing:0.6px;">Địa chỉ:</div>
<div class="t " style="left:143.7px;top:443.76px;font-size:18px;line-height:22px;font-weight:400;color:#1f1f1f;letter-spacing:0.007px;">09 Lý <span class="sp">Chính</span> <span class="sp">Thắng</span>, <span class="sp">phường</span> 7, <span class="sp">quận</span> 1, TP.HCM</div>
<div class="t med2" style="left:44.5px;top:489.46px;font-size:18px;line-height:22px;font-weight:400;color:#2c382c;letter-spacing:-0.005px;">MỤC TIÊU NGHỀ NGHIỆP</div>
<div class="t med2" style="left:44.5px;top:526.06px;font-size:18px;line-height:22px;font-weight:400;color:#1f1f1f;letter-spacing:0.621px;">Là một <span class="sp">người</span> <span class="sp">nhiệt</span> <span class="sp">huyết</span>, <span class="sp">trách</span> <span class="sp">nhiệm</span> và <span class="sp">tận</span> <span class="sp">tâm</span>, <span class="sp">tôi</span> <span class="sp">mong</span> <span class="sp">muốn</span> <span class="sp">đóng</span> <span class="sp">góp</span> <span class="sp">kinh</span> <span class="sp">nghiệm</span> <span class="sp">của</span> <span class="sp">mình</span></div>
<div class="t med2" style="left:45.5px;top:553.36px;font-size:18px;line-height:22px;font-weight:400;color:#1f1f1f;letter-spacing:0.481px;"><span class="sp">trong</span> <span class="sp">lĩnh</span> vực <span class="sp">bán</span> <span class="sp">hàng</span> <span class="sp">và</span> tư vấn <span class="sp">sản</span> phẩm. Mục <span class="sp">tiêu</span> <span class="sp">của</span> <span class="sp">tôi</span> là <span class="sp">giúp</span> <span class="sp">khách</span> <span class="sp">hàng</span> <span class="sp">tìm</span> <span class="sp">được</span> <span class="sp">sản</span></div>
<div class="t med2" style="left:44.5px;top:580.66px;font-size:18px;line-height:22px;font-weight:400;color:#1f1f1f;letter-spacing:0.603px;"><span class="sp">phẩm</span> <span class="sp">phù</span> <span class="sp">hợp</span>, <span class="sp">đồng</span> <span class="sp">thời</span> phát <span class="sp">triển</span> <span class="sp">kỹ</span> <span class="sp">năng</span> cá nhân và <span class="sp">hỗ</span> <span class="sp">trợ</span> <span class="sp">doanh</span> <span class="sp">nghiệp</span> <span class="sp">đạt</span> <span class="sp">mục</span> <span class="sp">tiêu</span> <span class="sp">kinh</span></div>
<div class="t med2" style="left:45.5px;top:607.96px;font-size:18px;line-height:22px;font-weight:400;color:#1f1f1f;letter-spacing:0.9px;"><span class="sp">doanh</span>.</div>
<div class="t med2" style="left:44.5px;top:654.16px;font-size:18px;line-height:22px;font-weight:400;color:#404040;letter-spacing:0.147px;">KINH NGHIỆM LÀM VIỆC</div>
<div class="t semi" style="left:44.5px;top:690.76px;font-size:18px;line-height:22px;font-weight:400;color:#1f1f1f;letter-spacing:0.647px;"><span class="sp">Nhân</span> <span class="sp">viên</span> <span class="sp">bán</span> <span class="sp">hàng</span></div>
<div class="t " style="left:44.5px;top:726.76px;font-size:18px;line-height:22px;font-weight:400;color:#2a2a2a;letter-spacing:0.085px;">Rạp <span class="sp">phim</span> CVG | 02/2017 - nay</div>
<div class="t semi" style="left:76px;top:768.26px;font-size:18px;line-height:22px;font-weight:400;color:#1f1f1f;letter-spacing:0.5px;"><span class="sp">Giao</span> tiếp <span class="sp">trực</span> tiếp với <span class="sp">khách</span> <span class="sp">hàng</span>,</div>
<div class="t semi" style="left:375.2px;top:768.26px;font-size:18px;line-height:22px;font-weight:400;color:#1f1f1f;letter-spacing:0.429px;"><span class="sp">giới</span> <span class="sp">thiệu</span> sản phẩm <span class="sp">và</span> tư vấn <span class="sp">các</span> dịch vụ <span class="sp">phù</span> <span class="sp">hợp</span>.</div>
<div class="t semi" style="left:76px;top:804.76px;font-size:18px;line-height:22px;font-weight:400;color:#1f1f1f;letter-spacing:0.44px;">Đáp ứng nhanh nhu cầu</div>
<div class="t " style="left:283.4px;top:804.76px;font-size:18px;line-height:22px;font-weight:400;color:#1f1f1f;letter-spacing:0.3px;">của <span class="sp">khách</span>,</div>
<div class="t semi" style="left:378.9px;top:804.76px;font-size:18px;line-height:22px;font-weight:400;color:#1f1f1f;letter-spacing:0.433px;">đảm bảo sự hài <span class="sp">lòng</span></div>
<div class="t " style="left:554.5px;top:804.76px;font-size:18px;line-height:22px;font-weight:400;color:#1f1f1f;letter-spacing:0.417px;">của họ.</div>
<div class="t " style="left:76px;top:841.76px;font-size:18px;line-height:22px;font-weight:400;color:#1f1f1f;letter-spacing:0.136px;">Tư vấn lịch chiếu <span class="sp">phim</span> <span class="sp">và</span> hỗ <span class="sp">trợ</span> <span class="sp">khách</span> <span class="sp">hàng</span> <span class="sp">trong</span> <span class="sp">quá</span> <span class="sp">trình</span> <span class="sp">mua</span> <span class="sp">vé</span>.</div>
<div class="t semi" style="left:45.5px;top:882.26px;font-size:18px;line-height:22px;font-weight:400;color:#1f1f1f;letter-spacing:0.583px;"><span class="sp">Chuyên</span> <span class="sp">gia</span> <span class="sp">giáo</span> dục</div>
<div class="t " style="left:45.5px;top:919.06px;font-size:18px;line-height:22px;font-weight:400;color:#2a2a2a;letter-spacing:0.14px;">Trung <span class="sp">tâm</span> <span class="sp">Nghiên</span> cứu Bắc Ninh | 2010 - 2017</div>
<div class="t " style="left:75.5px;top:959.96px;font-size:18px;line-height:22px;font-weight:400;color:#1f1f1f;letter-spacing:0.146px;">Tổ chức hội <span class="sp">thảo</span> về <span class="sp">giáo</span> dục <span class="sp">cho</span> <span class="sp">người</span> lớn <span class="sp">và</span> <span class="sp">lý</span> <span class="sp">thuyết</span> học tập.</div>
<div class="t " style="left:535.3px;top:235.68px;font-size:24px;line-height:30px;font-weight:700;color:#111;letter-spacing:0.159px;">Những phần bôi vàng này cực kỳ</div>
<div class="t " style="left:547.3px;top:268.28px;font-size:24px;line-height:30px;font-weight:700;color:#111;letter-spacing:0.479px;">quan trọng, đảm bảo trúng tim</div>
<div class="t " style="left:637.3px;top:301.68px;font-size:24px;line-height:30px;font-weight:700;color:#111;letter-spacing:0.769px;">nhà tuyển dụng</div>
<div class="t " style="left:1036.5px;top:106.13px;font-size:23px;line-height:29px;font-weight:400;color:#222;letter-spacing:-0.583px;">CharmIQ</div>
<div class="t " style="left:1009px;top:158.48px;font-size:14.5px;line-height:18px;font-weight:700;color:#333;letter-spacing:0.9px;">Format</div>
<div class="t " style="left:1009px;top:342.18px;font-size:14.5px;line-height:18px;font-weight:700;color:#333;letter-spacing:0.76px;">Charms</div>
<div class="t " style="left:1248px;top:341.65px;font-size:14px;line-height:18px;font-weight:400;color:#8f98a3;letter-spacing:0.231px;">Search by Name</div>
<div class="t " style="left:1037.8px;top:387.16px;font-size:18px;line-height:22px;font-weight:400;color:#555;letter-spacing:0.188px;">All Purpose Charm</div>
<div class="t " style="left:1036.8px;top:423.76px;font-size:18px;line-height:22px;font-weight:400;color:#555;letter-spacing:0.287px;">Charm Writing Specialist - Use me to ...</div>
<div class="t " style="left:1035.8px;top:460.36px;font-size:18px;line-height:22px;font-weight:400;color:#c4c4c4;letter-spacing:0.306px;">Internet Researcher</div>
<div class="t " style="left:1036.8px;top:496.96px;font-size:18px;line-height:22px;font-weight:400;color:#555;letter-spacing:0.233px;">Resume Optimizer</div>
<div class="t " style="left:1036.8px;top:533.56px;font-size:18px;line-height:22px;font-weight:400;color:#555;letter-spacing:0.184px;">Resume Optimizer |VN</div>
<div class="t " style="left:1009px;top:581.18px;font-size:14.5px;line-height:18px;font-weight:700;color:#333;letter-spacing:0.611px;">Reference Materials</div>
<div class="t med" style="left:1027.3px;top:620.51px;font-size:17px;line-height:21px;font-weight:400;color:#333;letter-spacing:0.58px;">CV_nhan vien ban hang.jpeg</div>
<div class="t " style="left:1073px;top:645.35px;font-size:14px;line-height:18px;font-weight:700;color:#8a8a8a;letter-spacing:0.5px;">You</div>
<div class="t " style="left:1117px;top:645.35px;font-size:14px;line-height:18px;font-weight:700;color:#8a8a8a;letter-spacing:1.429px;">2/1/2025</div>
<div class="t " style="left:1009px;top:741.88px;font-size:14.5px;line-height:18px;font-weight:700;color:#333;letter-spacing:0.66px;">Breakpoints</div>
<div class="t " style="left:1174px;top:790.46px;font-size:16px;line-height:20px;font-weight:400;color:#777;letter-spacing:0.538px;">No Breakpoints</div>
</body></html>
